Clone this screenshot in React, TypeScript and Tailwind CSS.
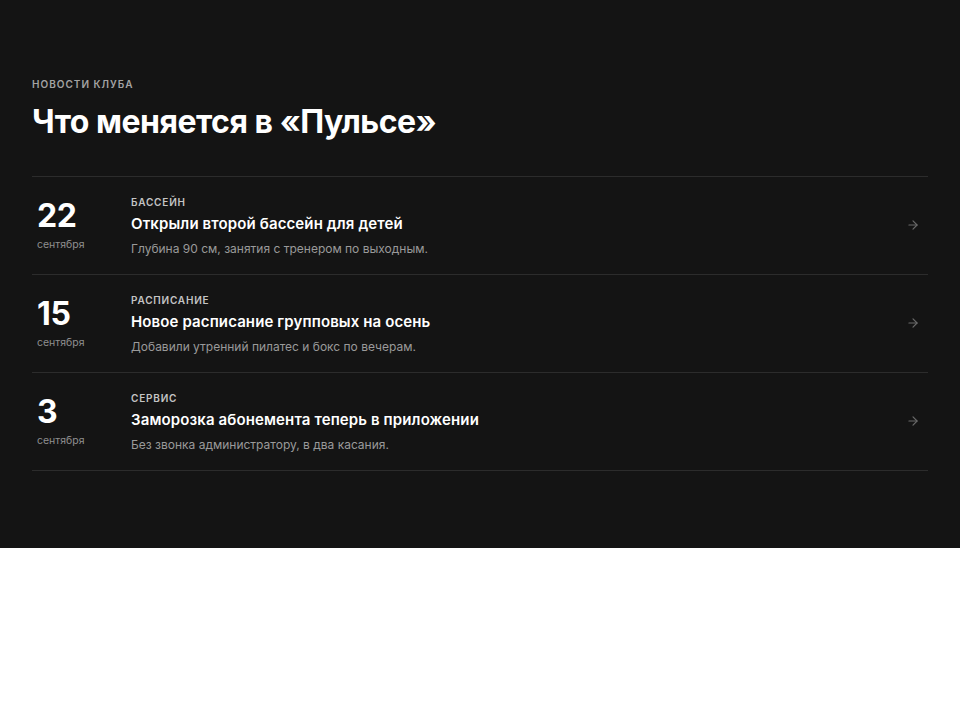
import React from "react";

type NewsItem = {
  day: string;
  month: string;
  tag: string;
  title: string;
  text: string;
};

const items: NewsItem[] = [
  {
    day: "22",
    month: "сентября",
    tag: "Бассейн",
    title: "Открыли второй бассейн для детей",
    text: "Глубина 90 см, занятия с тренером по выходным.",
  },
  {
    day: "15",
    month: "сентября",
    tag: "Расписание",
    title: "Новое расписание групповых на осень",
    text: "Добавили утренний пилатес и бокс по вечерам.",
  },
  {
    day: "3",
    month: "сентября",
    tag: "Сервис",
    title: "Заморозка абонемента теперь в приложении",
    text: "Без звонка администратору, в два касания.",
  },
];

function Arrow() {
  return (
    <svg width="14" height="14" viewBox="0 0 24 24" fill="none" stroke="currentColor" strokeWidth="2" strokeLinecap="round" strokeLinejoin="round">
      <path d="M5 12h14" />
      <path d="m12 5 7 7-7 7" />
    </svg>
  );
}

export default function App() {
  return (
    <div className="bg-white min-h-[720px]" style={{ fontFamily: "Inter, 'Noto Sans', sans-serif" }}>
      <section className="bg-[#141414] px-8 pt-[76px] pb-[77px]">
        <p className="text-[10px] font-semibold uppercase tracking-[0.1em] text-[#a3a3a3] leading-4">Новости клуба</p>
        <h2 className="mt-[10px] text-[32px] font-bold leading-[40px] tracking-[-0.015em] text-white">Что меняется в «Пульсе»</h2>
        <ul className="mt-[34px] border-t border-[#2c2c2c]">
          {items.map((it) => (
            <li key={it.title} className="flex items-center border-b border-[#2c2c2c] h-[98px] pl-[5px] pr-[8px]">
              <div className="w-[94px] shrink-0">
                <div className="text-[32px] font-bold leading-[36px] text-white tracking-[-0.01em]">{it.day}</div>
                <div className="text-[10.5px] text-[#8f8f8f] leading-4 mt-[3px]">{it.month}</div>
              </div>
              <div className="flex-1 min-w-0">
                <div className="text-[10px] font-semibold uppercase tracking-[0.08em] text-[#c4c4c4] leading-4">{it.tag}</div>
                <div className="mt-[3px] text-[15px] font-semibold text-white leading-[21px] tracking-[0.008em]">{it.title}</div>
                <div className="mt-[6px] text-[12px] text-[#9a9a9a] leading-[17px]">{it.text}</div>
              </div>
              <div className="text-[#6a6a6a] -mt-[2px]">
                <Arrow />
              </div>
            </li>
          ))}
        </ul>
      </section>
    </div>
  );
}
